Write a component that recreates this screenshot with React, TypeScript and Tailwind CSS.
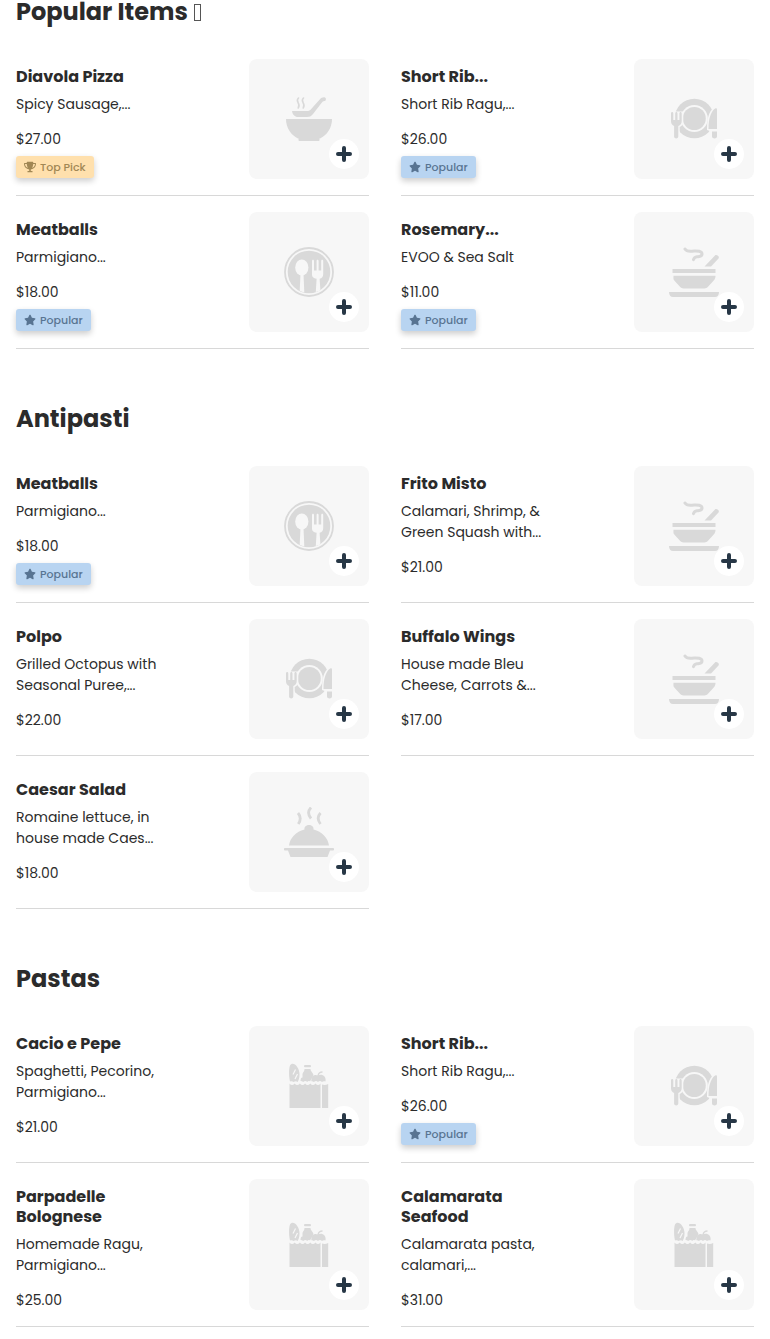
import React from 'react'
import { FaStar, FaTrophy } from 'react-icons/fa6'

type IconName = 'soup' | 'plate' | 'cutlery' | 'hotBowl' | 'cloche' | 'groceries'
type BadgeKind = 'popular' | 'topPick'

interface MenuItem {
  title: string
  description: string
  price: string
  icon: IconName
  badge?: BadgeKind
}

interface MenuSection {
  name: string
  trailingGlyph?: boolean
  items: MenuItem[]
}

const sections: MenuSection[] = [
  {
    name: 'Popular Items',
    trailingGlyph: true,
    items: [
      { title: 'Diavola Pizza', description: 'Spicy Sausage,...', price: '$27.00', icon: 'soup', badge: 'topPick' },
      { title: 'Short Rib...', description: 'Short Rib Ragu,...', price: '$26.00', icon: 'plate', badge: 'popular' },
      { title: 'Meatballs', description: 'Parmigiano...', price: '$18.00', icon: 'cutlery', badge: 'popular' },
      { title: 'Rosemary...', description: 'EVOO & Sea Salt', price: '$11.00', icon: 'hotBowl', badge: 'popular' },
    ],
  },
  {
    name: 'Antipasti',
    items: [
      { title: 'Meatballs', description: 'Parmigiano...', price: '$18.00', icon: 'cutlery', badge: 'popular' },
      { title: 'Frito Misto', description: 'Calamari, Shrimp, &\nGreen Squash with...', price: '$21.00', icon: 'hotBowl' },
      { title: 'Polpo', description: 'Grilled Octopus with\nSeasonal Puree,...', price: '$22.00', icon: 'plate' },
      { title: 'Buffalo Wings', description: 'House made Bleu\nCheese, Carrots &...', price: '$17.00', icon: 'hotBowl' },
      { title: 'Caesar Salad', description: 'Romaine lettuce, in\nhouse made Caes...', price: '$18.00', icon: 'cloche' },
    ],
  },
  {
    name: 'Pastas',
    items: [
      { title: 'Cacio e Pepe', description: 'Spaghetti, Pecorino,\nParmigiano...', price: '$21.00', icon: 'groceries' },
      { title: 'Short Rib...', description: 'Short Rib Ragu,...', price: '$26.00', icon: 'plate', badge: 'popular' },
      { title: 'Parpadelle\nBolognese', description: 'Homemade Ragu,\nParmigiano...', price: '$25.00', icon: 'groceries' },
      { title: 'Calamarata\nSeafood', description: 'Calamarata pasta,\ncalamari,...', price: '$31.00', icon: 'groceries' },
    ],
  },
]

const bg = '#f7f7f7'

const foodIcons: Record<IconName, React.ReactNode> = {
  soup: (
    <>
      <path d="M2 25h46c0 9-5 16-12 19.500H14C7 41 2 34 2 25z" />
      <rect x="14.500" y="44" width="21" height="3" rx="0.800" />
      <path d="M8 17h15c2 0 3-.6 4.200-2l8.500-9.500c1.400-1.700 3-2.500 4.700-2.300 2 .3 2.100 3.600 0 3.900-1.300.2-2 .8-2.900 1.800L29 20c-2 2.400-3.500 3-6 3h-9c-3.200 0-5.500-2.500-6-6z" />
      <path
        d="M14.500 4c-4 3.500 3 5.500-.3 10M19.500 4c-4 3.500 3 5.500-.3 10"
        fill="none"
        stroke="currentColor"
        strokeWidth="1.600"
        strokeLinecap="round"
      />
    </>
  ),
  plate: (
    <>
      <circle cx="25.300" cy="24.500" r="19.800" />
      <circle cx="25.300" cy="24.500" r="13.500" fill={bg} />
      <circle cx="25.300" cy="24.500" r="11.500" />
      <path
        d="M2 19v8c0 3 1.500 4.500 3.200 5v10.500a2 2 0 0 0 4 0V32c2-.6 3.600-2 3.600-5v-8z"
        stroke={bg}
        strokeWidth="3"
        fill={bg}
      />
      <path d="M2 19.500c0-2 2.300-2 2.300 0V26h1.900v-6.500c0-2 2.300-2 2.300 0V26h1.900v-6.500c0-2 2.300-2 2.300 0V27c0 3-1.400 4.300-3.400 5v10.500c0 2.600-4.200 2.600-4.200 0V32C3.300 31.300 2 30 2 27z" />
      <path d="M48 14c-5 1.500-8.500 9-8.500 21l3 1v8h5.500z" stroke={bg} strokeWidth="3" fill={bg} />
      <path d="M48 15.500c0-1.500-1.600-1.500-2.600-.5-3.500 3-5.900 9.500-5.900 20H48z" />
      <path d="M43 37.500h5v5c0 2.600-5 2.600-5 0z" />
    </>
  ),
  cutlery: (
    <>
      <circle cx="25" cy="25" r="24" fill="none" stroke="currentColor" strokeWidth="1.800" />
      <circle cx="25" cy="25" r="21.300" />
      <g fill={bg}>
        <ellipse cx="17.800" cy="20.500" rx="6.600" ry="8" />
        <path d="M16.500 27h3l.8 18.500a21 21 0 0 1-4.600-1.700z" />
        <path d="M28 14c0-1.800 2-1.800 2 0v9.500h2.600V14c0-1.800 2-1.800 2 0v9.500h2.600V14c0-1.800 2-1.800 2 0v13c0 3-1.300 4-3.600 4.800l.8 11.500a21 21 0 0 1-4.600 1.700l.8-13.200C29.300 31 28 30 28 27z" />
      </g>
    </>
  ),
  hotBowl: (
    <>
      <path
        d="M16 2c2 3.300 5.500 2.200 9 2 3-.2 8 0 8 3 0 3-3 2.500-5 2.700-2 .2-3 1-3.500 3"
        fill="none"
        stroke="currentColor"
        strokeWidth="3"
        strokeLinecap="round"
      />
      <path d="M35.500 19.500 46 8.500c1.400-1.400 5 1 3.500 3L42 19.500z" />
      <rect x="3.500" y="22" width="43" height="4" />
      <path d="M3.500 28.800h43c0 2-.6 3.600-2 5l-5.500 6c-1 1.200-2 1.700-3.500 1.700h-21c-1.500 0-2.500-.5-3.500-1.700l-5.500-6c-1.400-1.400-1-3-1-5z" />
      <path d="M0 45h50c0 3-1.500 5-4 5H4c-2.500 0-4-2-4-5z" />
    </>
  ),
  cloche: (
    <>
      <path d="M5 38.500C6 31 12 24.500 20.500 22.500c-1-6 10-6 9 0C38 24.500 44 31 45 38.500z" />
      <path d="M.8 41h48.400c1.200 0 1.200 2.400 0 2.400H46L43.500 50h-37L4 43.400H.8c-1.200 0-1.200-2.400 0-2.400z" />
      <path
        d="M14 6c3 3.500 3 7 .3 11M27 .5c-3.300 3.500-3.300 7 0 11M36.500 6c-3.200 3.500-3.200 7 0 11"
        fill="none"
        stroke="currentColor"
        strokeWidth="2.800"
      />
    </>
  ),
  groceries: (
    <>
      <path d="M5.500 22.500q2.500 3 5.200 0q2.500 3 5.200 0q2.500 3 5.200 0q2.500 3 5.200 0q2.500 3 5.200 0q2.500 3 5 0V47h-31z" />
      <path d="M38 23.500q3 1 6.200-.5V47H38z" />
      <path d="M6 4.500c3-5 10 2 9.500 9.500-.1 3-.8 5-1.800 7-1.300-1-2.700-1-4 0-1.200-1-2.500-1-3.700-.5C5 16 4.500 9 6 4.500z" />
      <path d="M11.500 8.500 9 13.500M13.500 13l-2.500 5" stroke={bg} strokeWidth="1.200" fill="none" />
      <rect x="20" y="4" width="7" height="2.300" rx="1.100" />
      <path d="M20.500 8h6c0 3 3 3.500 3 6.500l-3.500 6c-1-.8-2-.5-2.800.5-1.200-1.200-2.600-1.200-4 0-1-.8-2-1-2.700-1 0-2 .5-3.300 2-3.500V14c0-3 2-3 2-6z" />
      <path d="M34 14.500c4-2 8.500 1 7.500 6-1.500-.5-2.500-.3-3.500.5-1.500-1.200-2.700-1.200-4 0-1.500-1.200-2.700-1.200-4 0-.8-.8-1.800-1-2.700-.8 0-5 3-7.500 6.700-5.700z" />
      <path d="M34 15c.3-2.500 2-4 4.500-4" fill="none" stroke="currentColor" strokeWidth="1.300" />
    </>
  ),
}

const Badge: React.FC<{ kind: BadgeKind }> = ({ kind }) =>
  kind === 'topPick' ? (
    <span className="mt-[7px] flex h-[22px] w-fit items-center gap-1 rounded-[3px] bg-[#ffe0ad] px-2 text-[11px] leading-4 font-medium text-[#a18754] shadow-[0_3px_6px_rgba(0,0,0,0.2)]">
      <FaTrophy size={12} />
      Top Pick
    </span>
  ) : (
    <span className="mt-[7px] flex h-[22px] w-fit items-center gap-1 rounded-[3px] bg-[#b8d4f1] px-2 text-[11px] leading-4 font-medium text-[#587492] shadow-[0_3px_6px_rgba(0,0,0,0.2)]">
      <FaStar size={12} />
      Popular
    </span>
  )

const MenuCard: React.FC<{ item: MenuItem }> = ({ item }) => (
  <article className="flex justify-between gap-4 border-b border-[#d8d8d8] py-4">
    <div className="min-w-0 flex-1 pt-2">
      <h3 className="text-[16px] leading-5 font-bold whitespace-pre-line">{item.title}</h3>
      <p className="mt-[7px] text-[14px] leading-[21px] whitespace-pre-line">{item.description}</p>
      <p className="mt-[14px] text-[14px] leading-5">{item.price}</p>
      {item.badge && <Badge kind={item.badge} />}
    </div>
    <div className="relative flex min-h-[120px] w-[120px] shrink-0 items-center justify-center rounded-lg bg-[#f7f7f7] text-[#d9d9d9]">
      <svg viewBox="0 0 50 50" width="50" height="50" fill="currentColor" aria-hidden="true">
        {foodIcons[item.icon]}
      </svg>
      <button
        type="button"
        aria-label={`Add ${item.title}`}
        className="absolute right-2.5 bottom-2.5 flex size-[30px] items-center justify-center rounded-full bg-white text-[#273746]"
      >
        <svg viewBox="0 0 16 16" width="16" height="16" aria-hidden="true">
          <path d="M8 2v12M2 8h12" stroke="currentColor" strokeWidth="4" strokeLinecap="round" />
        </svg>
      </button>
    </div>
  </article>
)

export const App: React.FC = () => {
  return (
    <main className="bg-white px-4 pb-3 font-['Poppins','Inter',sans-serif] text-[#2b2b2b]">
      {sections.map((section, index) => (
        <section key={section.name} className="mb-[52px] last:mb-0">
          <h2
            className={`flex items-center gap-1.5 text-[24px] font-bold ${
              index === 0 ? 'mb-[19px] leading-6' : 'mb-[13px] leading-9'
            }`}
          >
            {section.name}
            {section.trailingGlyph && (
              <span className="h-[17px] w-[7px] border border-[#555555]" />
            )}
          </h2>
          <div className="grid grid-cols-2 gap-x-8">
            {section.items.map((item) => (
              <MenuCard key={item.title} item={item} />
            ))}
          </div>
        </section>
      ))}
    </main>
  )
}

export default App
